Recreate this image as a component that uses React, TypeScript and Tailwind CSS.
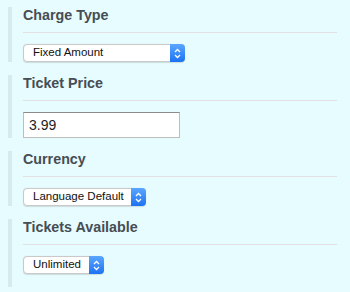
import React from "react";

function Chevrons() {
  return (
    <svg width="7" height="11" viewBox="0 0 7 11" fill="none">
      <path d="M1 4 L3.5 1.5 L6 4" stroke="white" strokeWidth="1.3" />
      <path d="M1 7 L3.5 9.5 L6 7" stroke="white" strokeWidth="1.3" />
    </svg>
  );
}

function Select({ label, width }: { label: string; width: string }) {
  return (
    <div
      className={`flex h-[18px] ${width} items-stretch rounded-[4px] border border-[#c9c9c9] bg-white shadow-[0_0.5px_1px_rgba(0,0,0,0.12)]`}
    >
      <span className="flex flex-1 items-center pl-[9px] text-[11.5px] text-[#111]">{label}</span>
      <span className="-my-px -mr-px flex w-[15px] items-center justify-center rounded-r-[4px] bg-gradient-to-b from-[#5aa6ff] to-[#1b72f2]">
        <Chevrons />
      </span>
    </div>
  );
}

function Section({
  title,
  children,
  last,
}: {
  title: string;
  children: React.ReactNode;
  last?: boolean;
}) {
  return (
    <div className={`border-l-4 border-[#d5ecee] pl-[11px] ${last ? "pb-[13px]" : ""}`}>
      <h3 className="text-[14.3px] font-bold leading-[17px] text-[#474d54]">{title}</h3>
      <div className="mt-[8px] mb-[11px] border-t border-[#e3e1e1]" />
      {children}
    </div>
  );
}

export default function App() {
  return (
    <div
      className="h-[292px] w-[350px] bg-[#e6fcfe] pt-[7px] pl-2 pr-[13px]"
      style={{ fontFamily: '"Liberation Sans", Arial, sans-serif' }}
    >
      <div className="flex flex-col gap-[13px]">
        <Section title="Charge Type">
          <Select label="Fixed Amount" width="w-[162px]" />
        </Section>
        <Section title="Ticket Price">
          <div className="mt-px flex h-[26px] w-[157px] items-center border border-[#bdbdbd] border-t-[#8c8c8c] bg-white pl-[5px] text-[14px] text-[#1c1c1c]">
            3.99
          </div>
        </Section>
        <Section title="Currency">
          <Select label="Language Default" width="w-[123px]" />
        </Section>
        <Section title="Tickets Available" last>
          <Select label="Unlimited" width="w-[81px]" />
        </Section>
      </div>
    </div>
  );
}
